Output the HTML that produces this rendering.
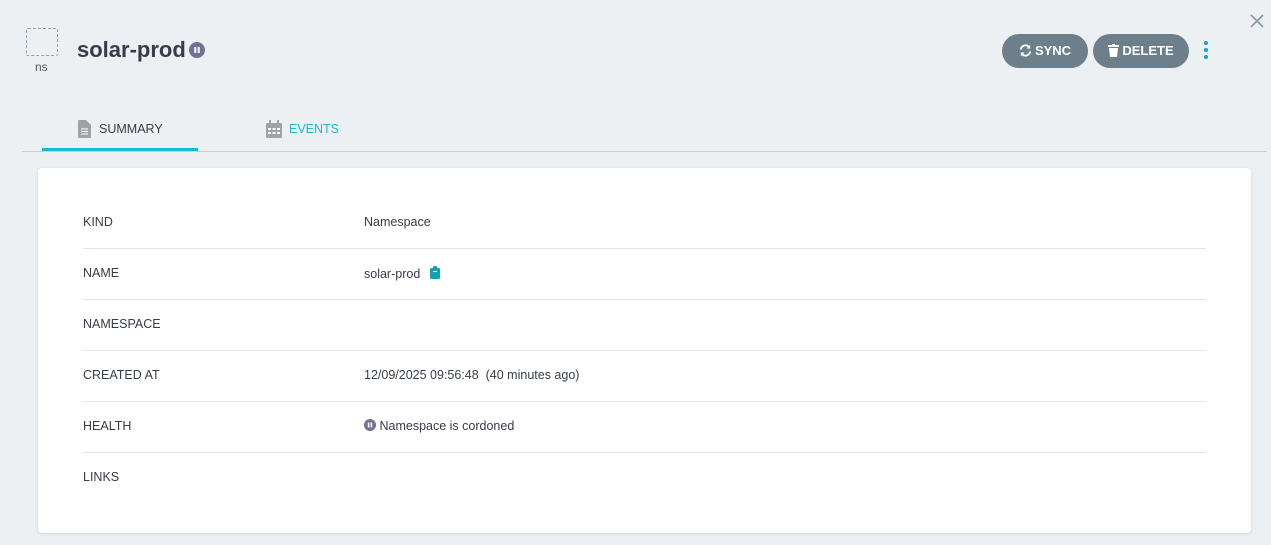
<!DOCTYPE html>
<html><head><style>
body{margin:0;width:1271px;height:545px;background:#edf0f3;font-family:"Liberation Sans",sans-serif;position:relative;overflow:hidden;color:#363c4a}
.abs{position:absolute}
.btn{position:absolute;top:34px;height:34px;border-radius:17px;background:#6d7f8b;color:#fff;font-size:13px;font-weight:bold;line-height:34px;text-align:center}
.btn svg{vertical-align:-2px;margin-right:3px}
.card{position:absolute;left:38px;top:168px;width:1213px;height:365px;background:#fff;border-radius:4px;box-shadow:0 1px 3px rgba(0,0,0,.12)}
.row{position:absolute;left:45px;width:1123px;height:51px;border-bottom:1px solid #dee6eb;font-size:12.5px}
.row .k{position:absolute;left:0;top:18px;color:#363c4a}
.row .v{position:absolute;left:281px;top:18px;color:#363c4a;font-size:12.5px}
</style></head><body>
<div class="abs" style="left:26px;top:28px;width:30px;height:26px;border:1.5px dashed #8fa4b1;border-radius:2px"></div>
<div class="abs" style="left:35px;top:60px;font-size:12px;color:#555">ns</div>
<div class="abs" style="left:77px;top:37px;font-size:22px;font-weight:bold;color:#363c4a">solar-prod</div>
<svg class="abs" style="left:189px;top:42px" width="16" height="16"><circle cx="8" cy="8" r="8" fill="#766f94"/><rect x="5.3" y="5" width="2" height="6" fill="#fff"/><rect x="8.7" y="5" width="2" height="6" fill="#fff"/></svg>
<div class="btn" style="left:1002px;width:86px"><svg width="13" height="13" viewBox="0 0 14 14"><path d="M2 6a5 5 0 0 1 9-2.5M12 8a5 5 0 0 1-9 2.5" fill="none" stroke="#fff" stroke-width="2"/><path d="M12 1v4h-4zM2 13v-4h4z" fill="#fff"/></svg>SYNC</div>
<div class="btn" style="left:1093px;width:96px"><svg width="11" height="13" viewBox="0 0 11 13"><rect x="0" y="1" width="11" height="2" fill="#fff"/><rect x="4" y="0" width="3" height="2" fill="#fff"/><path d="M1 4h9l-1 9H2z" fill="#fff"/></svg>DELETE</div>
<svg class="abs" style="left:1203px;top:40px" width="6" height="20"><circle cx="3" cy="3" r="2" fill="#16a5c0"/><circle cx="3" cy="10" r="2" fill="#16a5c0"/><circle cx="3" cy="17" r="2" fill="#16a5c0"/></svg>
<svg class="abs" style="left:1250px;top:14px" width="14" height="14"><path d="M1 1L13 13M13 1L1 13" stroke="#8a9aa5" stroke-width="1.6"/></svg>
<svg class="abs" style="left:78px;top:120px" width="13" height="18"><path d="M0 1a1 1 0 0 1 1-1h7l5 5v12a1 1 0 0 1-1 1H1a1 1 0 0 1-1-1z" fill="#a0a3a6"/><path d="M3 9h7M3 11.5h7M3 14h7" stroke="#fff" stroke-width="1"/></svg>
<div class="abs" style="left:99px;top:122px;font-size:12.5px;color:#363c4a">SUMMARY</div>
<svg class="abs" style="left:266px;top:120px" width="16" height="18"><rect x="0" y="3" width="16" height="15" rx="1" fill="#a0a3a6"/><rect x="3" y="0" width="2" height="4" fill="#a0a3a6"/><rect x="11" y="0" width="2" height="4" fill="#a0a3a6"/><g fill="#fff"><rect x="2" y="8" width="3" height="2"/><rect x="6.5" y="8" width="3" height="2"/><rect x="11" y="8" width="3" height="2"/><rect x="2" y="12" width="3" height="2"/><rect x="6.5" y="12" width="3" height="2"/><rect x="11" y="12" width="3" height="2"/></g></svg>
<div class="abs" style="left:289px;top:122px;font-size:12.5px;color:#1ebad0">EVENTS</div>
<div class="abs" style="left:42px;top:148px;width:156px;height:3px;background:#1ebad0"></div>
<div class="abs" style="left:22px;top:151px;width:1245px;height:1px;background:#c8ced3"></div>
<div class="card">
<div class="row" style="top:29px"><span class="k">KIND</span><span class="v">Namespace</span></div>
<div class="row" style="top:80px"><span class="k">NAME</span><span class="v">solar-prod <svg width="10" height="13" style="margin-left:6px;vertical-align:-1px"><rect x="0" y="2" width="10" height="11" rx="1.5" fill="#16a0b0"/><rect x="3" y="0" width="4" height="3" rx="1" fill="#16a0b0"/><rect x="3" y="5" width="4" height="1" fill="#fff"/></svg></span></div>
<div class="row" style="top:131px"><span class="k">NAMESPACE</span></div>
<div class="row" style="top:182px"><span class="k">CREATED AT</span><span class="v">12/09/2025 09:56:48&nbsp; (40 minutes ago)</span></div>
<div class="row" style="top:233px"><span class="k">HEALTH</span><span class="v"><svg width="12" height="12" style="vertical-align:-1px"><circle cx="6" cy="6" r="6" fill="#766f94"/><rect x="3.8" y="3.5" width="1.6" height="5" fill="#fff"/><rect x="6.6" y="3.5" width="1.6" height="5" fill="#fff"/></svg> Namespace is cordoned</span></div>
<div class="row" style="top:284px;border:none"><span class="k">LINKS</span></div>
</div>
</body></html>
